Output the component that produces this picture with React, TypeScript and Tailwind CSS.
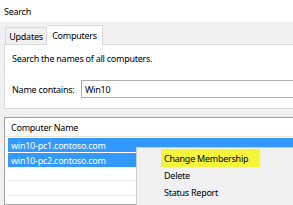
export default function App() {
  const font = { fontFamily: '"Noto Sans", "Segoe UI", sans-serif' };
  return (
    <div
      className="relative w-[293px] h-[205px] overflow-hidden bg-white text-[9px] tracking-[-0.25px] leading-none text-[#000] whitespace-nowrap"
      style={font}
    >
      {/* Title */}
      <div className="h-[22px] pl-[4px] flex items-center">Search</div>

      {/* Gray body */}
      <div className="bg-[#f0f0f0] h-[183px] pl-[4px]">
        {/* Tabs */}
        <div className="h-[22px] flex items-end pl-[1px]">
          <div className="h-[17px] w-[42px] border border-b-0 border-[#d9d9d9] bg-[#f0f0f0] flex items-center justify-center pt-[1px]">
            Updates
          </div>
          <div className="h-[20px] w-[56px] border border-b-0 border-l-0 border-[#d9d9d9] bg-white flex items-center justify-center -mb-[1px] relative z-10">
            Computers
          </div>
        </div>

        {/* Panel */}
        <div className="h-[65px] bg-white border border-r-0 border-[#d9d9d9] pl-[7px] pt-[9px]">
          <div>Search the names of all computers.</div>
          <div className="flex items-center mt-[17px]">
            <span className="w-[69px]">Name contains:</span>
            <div className="flex-1 h-[18px] border border-r-0 border-[#abadb3] flex items-center pl-[3px]">
              Win10
            </div>
          </div>
        </div>

        {/* List */}
        <div className="mt-[8px] h-[88px] bg-white border border-r-0 border-[#a0a0a0]">
          <div className="h-[19px] pl-[6px] flex items-center border-b border-[#e5e5e5]">
            Computer Name
          </div>
          <div className="pl-[3px]">
            <div className="h-[14px] mt-[1px] bg-[#3399ff] text-white flex items-center pl-[3px]">
              win10-pc1.contoso.com
            </div>
            <div className="h-[14px] mt-[1px] bg-[#3399ff] text-white flex items-center pl-[3px] w-[128px]">
              win10-pc2.contoso.com
            </div>
            <div className="h-[14px] border-b border-[#f0f0f0]" />
            <div className="h-[15px] border-b border-[#f0f0f0]" />
          </div>
        </div>
      </div>

      {/* Context menu */}
      <div className="absolute left-[136px] top-[147px] w-[170px] h-[70px] bg-[#f0f0f0] border border-[#cccccc] shadow-[2px_2px_3px_rgba(0,0,0,0.25)] pt-[1px]">
        <div className="h-[18px] flex items-center">
          <div className="ml-[24px] h-[18px] w-[99px] bg-[#f4f43a] flex items-center pl-[3px]">
            Change Membership
          </div>
        </div>
        <div className="h-[17px] flex items-center pl-[27px]">Delete</div>
        <div className="h-[17px] flex items-center pl-[27px]">Status Report</div>
      </div>
    </div>
  );
}
